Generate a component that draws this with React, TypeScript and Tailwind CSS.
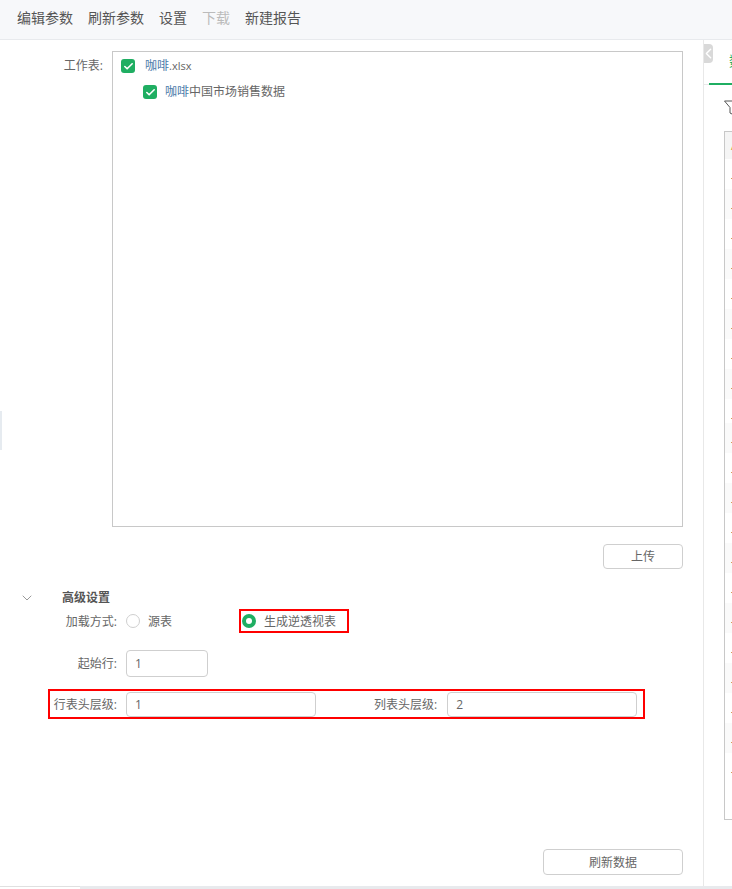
import { Check, ChevronDown, ChevronLeft } from "lucide-react"

const font = "[font-family:'Open_Sans','Noto_Sans_CJK_SC',sans-serif]"

function CheckBox() {
    return (
        <span className="flex h-3.5 w-3.5 shrink-0 items-center justify-center rounded-[3px] bg-[#1fae62]">
            <Check size={11} strokeWidth={3.5} className="text-white" />
        </span>
    )
}

function TextBox({ value, className }: { value: string; className: string }) {
    return (
        <div className={"flex items-center rounded border border-[#cfcfcf] pl-2 pt-px text-xs text-[#666] " + className}>
            {value}
        </div>
    )
}

export default function App() {
    const rows = Array.from({ length: 21 }, (_, i) => i)

    return (
        <div className={"relative flex h-[889px] w-[732px] flex-col overflow-hidden bg-white " + font}>
            {/* toolbar */}
            <div className="flex h-10 shrink-0 items-center gap-[15px] border-b border-[#e8eaed] bg-[#f7f8fa] pb-1 pl-[17px] text-sm text-[#555]">
                <span>编辑参数</span>
                <span>刷新参数</span>
                <span>设置</span>
                <span className="text-[#bbb]">下载</span>
                <span>新建报告</span>
            </div>

            <div className="flex min-h-0 grow">
                {/* form */}
                <div className="relative flex w-[703px] shrink-0 flex-col pt-[11px] text-xs text-[#666]">
                    <div className="absolute left-0 top-[371px] h-[39px] w-0.5 bg-[#e6ebf0]" />

                    <div className="flex items-start">
                        <span className="w-[103px] pt-[7px] text-right">工作表:</span>
                        <div className="ml-[9px] h-[476px] w-[571px] border border-[#c8c8c8] pl-2 pt-[5px]">
                            <div className="flex h-[18px] items-center gap-[10px]">
                                <CheckBox />
                                <span><span className="text-[#4a7aa8]">咖啡</span><span className="text-[11px]">.xlsx</span></span>
                            </div>
                            <div className="ml-[22px] mt-2 flex h-[18px] items-center gap-2">
                                <CheckBox />
                                <span><span className="text-[#4a7aa8]">咖啡</span>中国市场销售数据</span>
                            </div>
                        </div>
                    </div>

                    <div className="mt-[17px] flex justify-end pr-5">
                        <button className="h-[25px] w-20 rounded border border-[#cfcfcf] pt-px text-xs text-[#666]">上传</button>
                    </div>

                    <div className="mt-5 flex h-[17px] items-center">
                        <ChevronDown size={16} strokeWidth={1} className="ml-[19px] text-[#666]" />
                        <span className="ml-[27px] font-bold text-[#555]">高级设置</span>
                    </div>

                    <div className="mt-[3px] flex h-6 items-center">
                        <span className="w-[117px] pt-px text-right">加载方式:</span>
                        <span className="ml-[9px] h-3.5 w-3.5 rounded-full border border-[#cfcfcf]" />
                        <span className="ml-2 pt-px">源表</span>
                        <div className="ml-[67px] flex h-6 w-[110px] items-center border-2 border-[#f00] pl-px">
                            <span className="flex h-3.5 w-3.5 items-center justify-center rounded-full bg-[#1fae62]">
                                <span className="h-1.5 w-1.5 rounded-full bg-white" />
                            </span>
                            <span className="ml-2 pt-px">生成逆透视表</span>
                        </div>
                    </div>

                    <div className="mt-[17px] flex items-center">
                        <span className="w-[117px] pt-px text-right">起始行:</span>
                        <TextBox value="1" className="ml-[9px] h-[27px] w-[82px]" />
                    </div>

                    <div className="ml-12 mt-3 flex h-[30px] w-[597px] items-center border-2 border-[#f00]">
                        <span className="w-[67px] pt-px text-right">行表头层级:</span>
                        <TextBox value="1" className="ml-[9px] h-[25px] w-[190px]" />
                        <span className="ml-[58px] pt-px">列表头层级:</span>
                        <TextBox value="2" className="ml-[10px] h-[25px] w-[190px]" />
                    </div>

                    <div className="mt-[130px] flex justify-end pr-5">
                        <button className="h-[26px] w-[140px] rounded border border-[#cfcfcf] pt-px text-xs text-[#666]">刷新数据</button>
                    </div>
                </div>

                {/* right panel, clipped by the window */}
                <div className="relative min-w-0 grow overflow-hidden border-l border-[#e8e8e8]">
                    <div className="absolute left-0 top-1 flex h-[19px] w-[9px] items-center justify-center overflow-hidden rounded-r-sm bg-[#d9d9d9]">
                        <ChevronLeft size={17} strokeWidth={2} className="shrink-0 text-white" />
                    </div>
                    <div className="flex h-[45px] border-b border-[#e8e8e8] pl-[5px]">
                        <div className="h-[45px] w-[30px] border-b-2 border-[#1fae62] pl-5 pt-[11px] text-sm whitespace-nowrap text-[#1fae62]">数据</div>
                    </div>
                    <svg width="16" height="16" viewBox="0 0 16 16" className="ml-5 mt-[15px]">
                        <path d="M0.5 1H15.5L10 7.5V15L6 13V7.5Z" fill="#fff" stroke="#555" strokeWidth="1" />
                    </svg>
                    <div className="ml-5 mt-[15px] h-[689px] w-[60px] border border-[#c8c8c8]">
                        <div className="h-[27px] bg-[#f5f5f5] pl-1.5 pt-1.5 text-xs text-[#c9a23a]">A</div>
                        {rows.map((i) => (
                            <div key={i} className={(i === 8 ? "h-6 " : "h-[30px] ") + "pl-1.5 pt-[19px] " + (i % 2 === 1 ? "bg-[#fafafa]" : "bg-white")}>
                                <div className="h-px w-1 bg-[#d99a55]" />
                            </div>
                        ))}
                    </div>
                </div>
            </div>

            {/* bottom scrollbar track */}
            <div className="flex h-[3px] shrink-0">
                <div className="w-20 border-t border-[#e0e0e0]" />
                <div className="grow bg-[#e8eaed]" />
            </div>
        </div>
    )
}
